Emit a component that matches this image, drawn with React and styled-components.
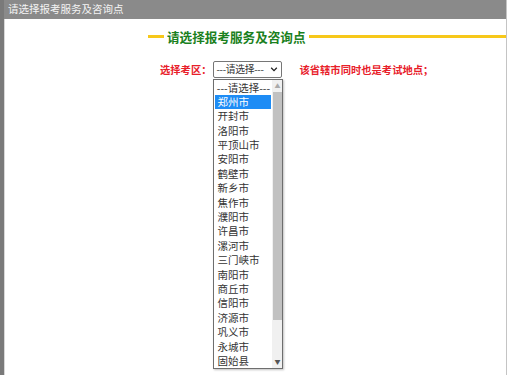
import React from 'react'
import styled, { createGlobalStyle } from 'styled-components'

const GlobalStyle = createGlobalStyle`
  html, body {
    margin: 0;
    padding: 0;
    background: #fff;
  }
  body {
    font-family: "Noto Sans CJK SC", "Microsoft YaHei", sans-serif;
  }
`

const cities = [
  '郑州市', '开封市', '洛阳市', '平顶山市', '安阳市', '鹤壁市', '新乡市',
  '焦作市', '濮阳市', '许昌市', '漯河市', '三门峡市', '南阳市', '商丘市',
  '信阳市', '济源市', '巩义市', '永城市', '固始县',
]

const Frame = styled.div`
  display: flex;
  height: 375px;
  overflow: hidden;
`

const LeftStrip = styled.div`
  width: 4px;
  background: #7a7a7a;
`

const Panel = styled.div`
  width: 502px;
  border-right: 1px solid #c4c4c4;
  display: flex;
  flex-direction: column;
`

const Header = styled.div`
  height: 19px;
  background: #8a8a8a;
  color: #f4f4f4;
  font-size: 10.5px;
  line-height: 17px;
  padding-left: 4px;
`

const Body = styled.div`
  border-left: 1px solid #d8d8d8;
  flex: 1;
`

const TitleRow = styled.div`
  display: flex;
  align-items: center;
  padding-left: 143px;
  margin-top: 9px;
  height: 16px;
`

const Line = styled.div`
  height: 3px;
  background: #f7c81a;
  width: ${p => (p.$grow ? 'auto' : '16px')};
  flex: ${p => (p.$grow ? 1 : 'none')};
`

const Title = styled.div`
  color: #1a8020;
  font-weight: bold;
  font-size: 12.6px;
  padding: 0 3px;
  white-space: nowrap;
`

const FormRow = styled.div`
  display: flex;
  align-items: center;
  padding-left: 155px;
  margin-top: 16px;
  height: 18px;
`

const Red = styled.span`
  color: #e8202a;
  font-weight: bold;
  font-size: 10.3px;
  white-space: nowrap;
  margin-left: ${p => p.$ml || 0}px;
`

const SelectWrap = styled.div`
  position: relative;
  margin-left: 2px;
`

const SelectBox = styled.div`
  width: 62px;
  height: 15px;
  border: 1px solid #767676;
  border-radius: 2px;
  display: flex;
  align-items: center;
  justify-content: space-between;
  padding: 0 3px 0 2px;
  box-sizing: content-box;
  font-size: 9.8px;
  letter-spacing: -0.3px;
  color: #333;
  background: #fff;
`

const Chevron = styled.svg`
  width: 8px;
  height: 8px;
`

const DropList = styled.div`
  position: absolute;
  left: 0;
  top: 18px;
  width: 68px;
  height: 288px;
  border: 1px solid #6e6e6e;
  background: #fff;
  box-shadow: 1px 1px 2px rgba(0, 0, 0, 0.25);
  display: flex;
`

const Items = styled.div`
  flex: 1;
  padding: 1px 1px 0 1px;
`

const Item = styled.div`
  height: 14.4px;
  line-height: 14.4px;
  font-size: 10.5px;
  color: ${p => (p.$active ? '#fff' : '#333')};
  background: ${p => (p.$active ? '#1e8cf5' : 'transparent')};
  padding-left: ${p => (p.$center ? 0 : 2)}px;
  text-align: ${p => (p.$center ? 'center' : 'left')};
  white-space: nowrap;
`

const Scroll = styled.div`
  width: 10px;
  background: #f0f0f0;
  display: flex;
  flex-direction: column;
  align-items: center;
`

const Arrow = styled.div`
  height: 12px;
  display: flex;
  align-items: center;
  justify-content: center;
  font-size: 6px;
  color: ${p => p.$dim ? '#aaa' : '#555'};
`

const Thumb = styled.div`
  width: 9px;
  height: 228px;
  background: #c1c1c1;
`

const Track = styled.div`
  flex: 1;
`

export default function App() {
  return (
    <>
      <GlobalStyle />
      <Frame>
        <LeftStrip />
        <Panel>
          <Header>请选择报考服务及咨询点</Header>
          <Body>
            <TitleRow>
              <Line />
              <Title>请选择报考服务及咨询点</Title>
              <Line $grow />
            </TitleRow>
            <FormRow>
              <Red>选择考区：</Red>
              <SelectWrap>
                <SelectBox>
                  <span>---请选择---</span>
                  <Chevron viewBox="0 0 10 10">
                    <path d="M1.5 3.5 L5 7 L8.5 3.5" fill="none" stroke="#222" strokeWidth="1.6" />
                  </Chevron>
                </SelectBox>
                <DropList>
                  <Items>
                    <Item $center>---请选择---</Item>
                    {cities.map((c, i) => (
                      <Item key={c} $active={i === 0}>{c}</Item>
                    ))}
                  </Items>
                  <Scroll>
                    <Arrow $dim>▲</Arrow>
                    <Thumb />
                    <Track />
                    <Arrow>▼</Arrow>
                  </Scroll>
                </DropList>
              </SelectWrap>
              <Red $ml={17}>该省辖市同时也是考试地点；</Red>
            </FormRow>
          </Body>
        </Panel>
      </Frame>
    </>
  )
}
